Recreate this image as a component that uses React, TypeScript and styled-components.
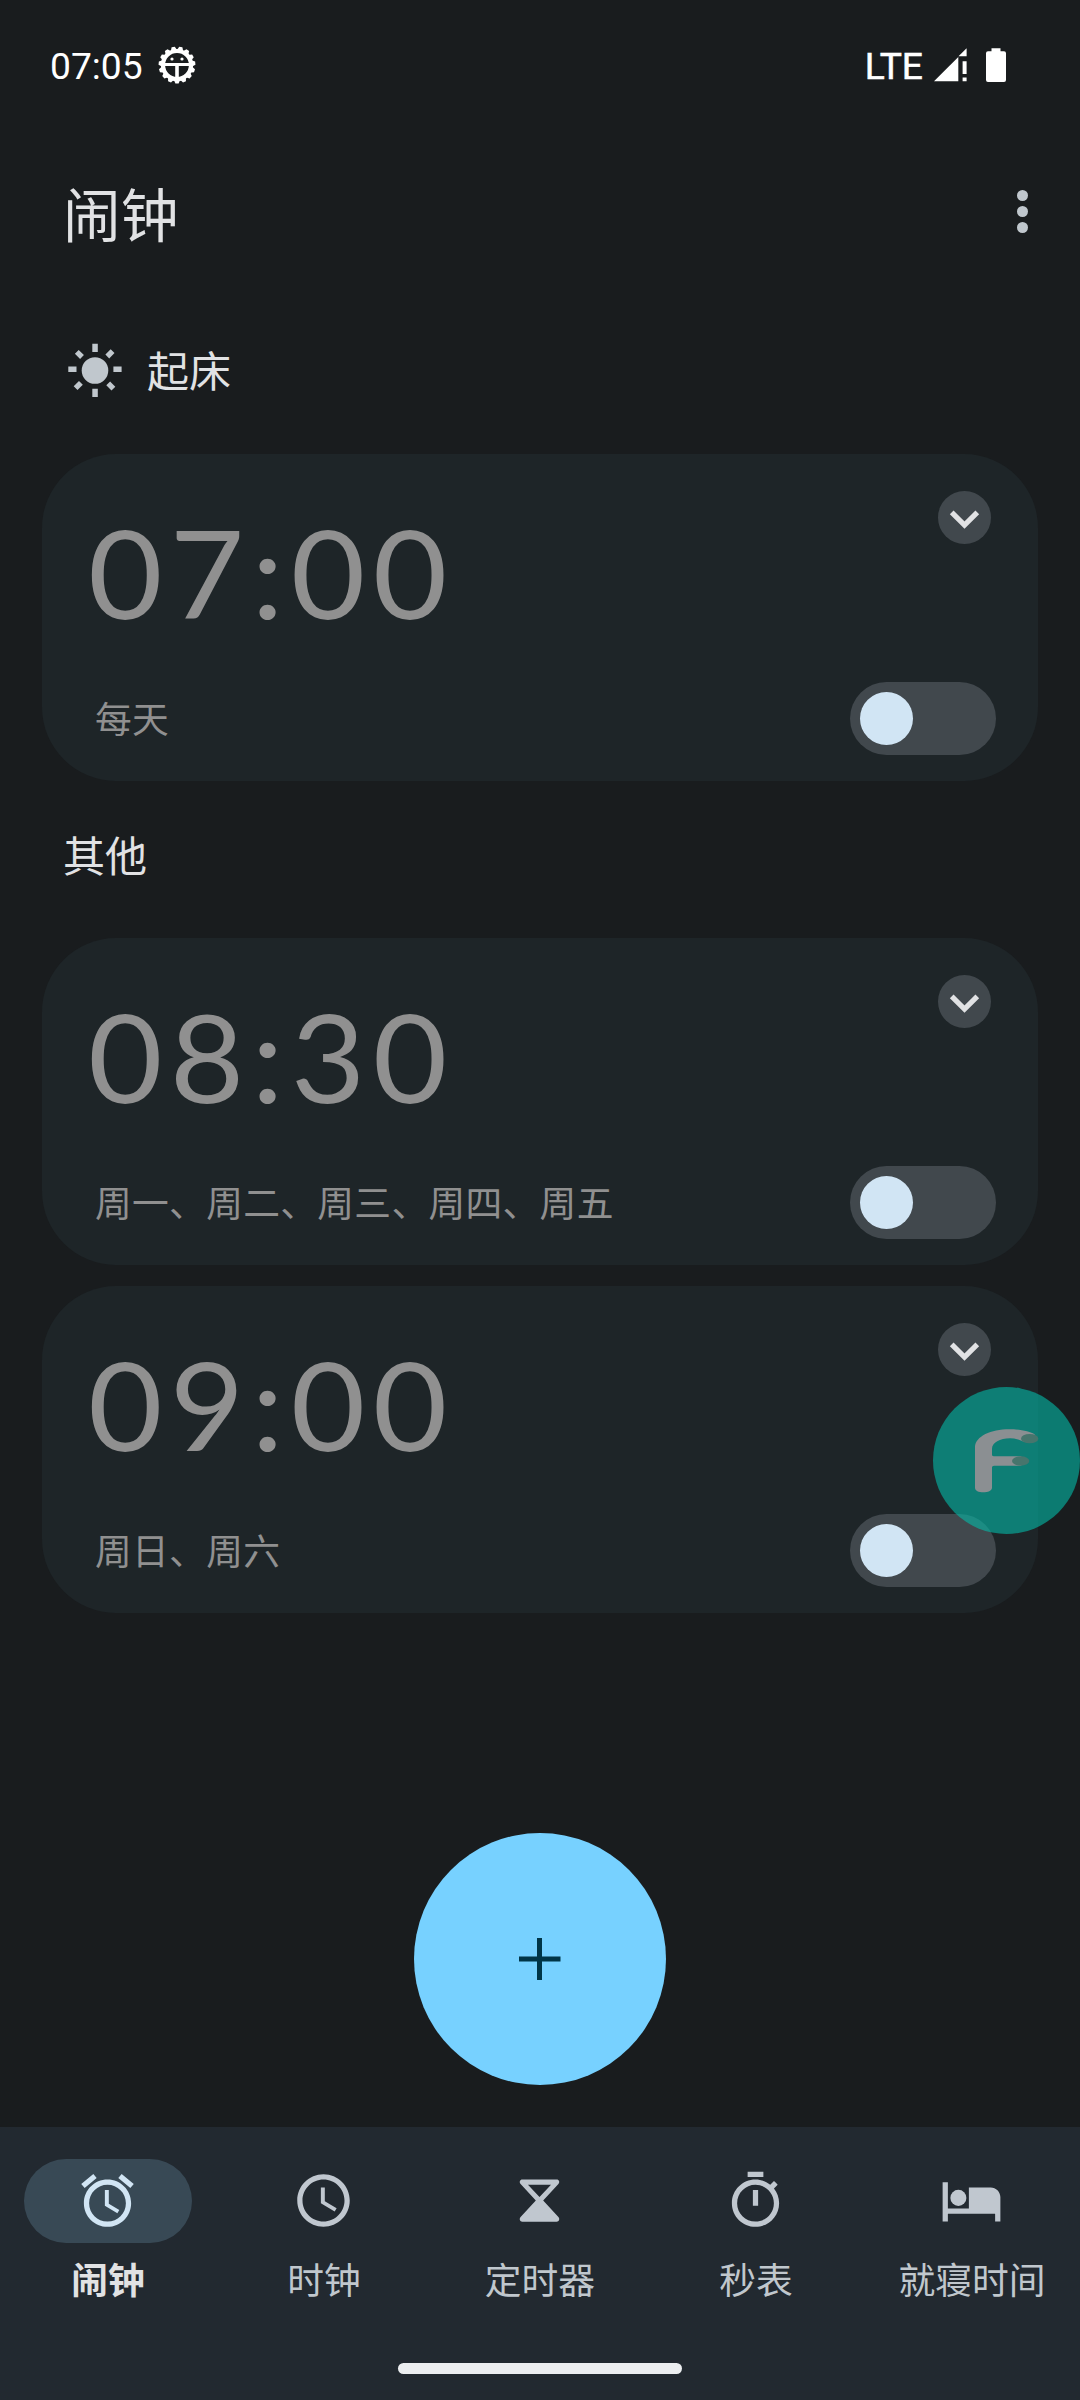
import React from 'react';
import styled, { createGlobalStyle } from 'styled-components';

const c = {
  bg: '#191c1e',
  card: '#1e2528',
  nav: '#222930',
  text: '#e1e2e4',
  soft: '#c0c7cd',
  dim: '#909090',
  control: '#41484d',
  pale: '#d1e5f4',
  accent: '#77d1ff',
  onAccent: '#003547',
};

const GlobalStyle = createGlobalStyle`
  html, body { margin: 0; padding: 0; background: ${c.bg}; }
  *, *::before, *::after { box-sizing: border-box; }
  button { border: 0; padding: 0; background: none; font: inherit; color: inherit; }
  svg { display: block; flex: none; }
`;

const Screen = styled.div`
  position: relative;
  display: flex;
  flex-direction: column;
  width: 1080px;
  height: 2400px;
  overflow: hidden;
  background: ${c.bg};
  color: ${c.text};
  font-family: Roboto, 'Noto Sans CJK SC', sans-serif;
`;

const StatusBar = styled.header`
  display: flex;
  align-items: center;
  justify-content: space-between;
  height: 130px;
  padding: 0 74px 0 50px;
  color: #fff;
`;

const StatusGroup = styled.div<{ $gap: number }>`
  display: flex;
  align-items: center;
  gap: ${(p) => p.$gap}px;
`;

const StatusText = styled.span<{ $heavy?: boolean }>`
  padding-top: 1px;
  font-size: 37.2px;
  line-height: 44px;
  -webkit-text-stroke: ${(p) => (p.$heavy ? '0.5px #fff' : '0')};
`;

const TopBar = styled.div`
  display: flex;
  align-items: center;
  justify-content: space-between;
  height: 168px;
  padding: 0 42px 0 63px;
`;

const Title = styled.h1`
  margin: 0;
  padding-top: 6px;
  font-size: 57.75px;
  line-height: 80px;
  font-weight: 400;
`;

const Menu = styled.button`
  display: flex;
  flex-direction: column;
  align-items: center;
  gap: 5px;
  width: 31px;
  padding-bottom: 6px;
`;

const Dot = styled.i`
  width: 11px;
  height: 11px;
  border-radius: 50%;
  background: ${c.soft};
`;

const SectionHead = styled.h2<{ $height: number; $lift: number }>`
  display: flex;
  align-items: center;
  gap: 20px;
  height: ${(p) => p.$height}px;
  margin: 0;
  padding: 0 63px ${(p) => p.$lift}px;
  font-size: 42px;
  line-height: 60px;
  font-weight: 400;
`;

const SectionIcon = styled.span`
  padding-bottom: 7px;
`;

const CardList = styled.div`
  display: flex;
  flex-direction: column;
  gap: 21px;
  padding: 0 42px;
`;

const Card = styled.article`
  display: flex;
  flex-direction: column;
  justify-content: space-between;
  height: 327px;
  padding: 37px 42px 26px 42px;
  border-radius: 74px;
  background: ${c.card};
`;

const CardRow = styled.div<{ $align: string }>`
  display: flex;
  align-items: ${(p) => p.$align};
  justify-content: space-between;
`;

const Time = styled.span`
  margin: 7px 0 0 3.5px;
  font-family: Lato, sans-serif;
  font-size: 123px;
  line-height: 148px;
  letter-spacing: 6.9px;
  color: ${c.dim};
  transform: scaleX(1.045);
  transform-origin: left;
  white-space: nowrap;
`;

const Days = styled.span`
  padding: 4px 0 0 11px;
  font-size: 36.75px;
  line-height: 54px;
  letter-spacing: 0.3px;
  color: ${c.dim};
`;

const Expand = styled.button`
  display: flex;
  align-items: center;
  justify-content: center;
  width: 53px;
  height: 53px;
  margin-right: 5px;
  border-radius: 50%;
  background: ${c.control};
`;

const Toggle = styled.button`
  display: flex;
  align-items: center;
  width: 146px;
  height: 73px;
  padding: 0 10px;
  border-radius: 37px;
  background: ${c.control};
`;

const Thumb = styled.i`
  width: 53px;
  height: 53px;
  border-radius: 50%;
  background: ${c.pale};
`;

const AddArea = styled.div`
  display: flex;
  flex: 1;
  align-items: flex-end;
  justify-content: center;
  padding-bottom: 42px;
`;

const AddButton = styled.button`
  display: flex;
  align-items: center;
  justify-content: center;
  width: 252px;
  height: 252px;
  border-radius: 50%;
  background: ${c.accent};
`;

const BottomArea = styled.footer`
  display: flex;
  flex-direction: column;
  align-items: center;
  height: 273px;
  background: ${c.nav};
`;

const Nav = styled.nav`
  display: grid;
  grid-template-columns: repeat(5, 216px);
  height: 236px;
  padding-top: 32px;
`;

const NavItem = styled.button<{ $active?: boolean }>`
  display: flex;
  flex-direction: column;
  align-items: center;
  justify-content: flex-start;
  gap: 12px;
  color: ${(p) => (p.$active ? c.text : c.soft)};
  font-weight: ${(p) => (p.$active ? 700 : 400)};
`;

const Pill = styled.span<{ $active?: boolean }>`
  display: flex;
  align-items: center;
  justify-content: center;
  width: 168px;
  height: 84px;
  padding: 0 2px 2px 0;
  border-radius: 42px;
  background: ${(p) => (p.$active ? '#384955' : 'transparent')};
  color: ${(p) => (p.$active ? c.pale : '#c0c7cf')};
`;

const NavLabel = styled.span`
  font-size: 36.75px;
  line-height: 54px;
  white-space: nowrap;
`;

const Handle = styled.div`
  width: 284px;
  height: 11px;
  border-radius: 6px;
  background: #eceef0;
`;

const FloatingBubble = styled.div`
  position: absolute;
  top: 1387px;
  right: 0;
  width: 147px;
  height: 147px;
  border-radius: 50%;
  background: rgba(4, 187, 168, 0.6);
`;

const teeth = Array.from({ length: 15 }, (_, i) => i * 24);

const BugIcon = () => (
  <svg width="38" height="38" viewBox="-19 -19 38 38" fill="#fff">
    {teeth.map((a) => (
      <path key={a} d="M-3.500 14L-1.600 18.400H1.600L3.500 14Z" transform={`rotate(${a})`} />
    ))}
    <circle r="14" fill="none" stroke="#fff" strokeWidth="4.2" />
    <path d="M-13-2H13V1H1.800V13H-1.800V1H-13Z" />
    <circle cx="-5" cy="-6" r="1.6" />
    <circle cx="5" cy="-6" r="1.6" />
  </svg>
);

const SignalIcon = () => (
  <svg width="33" height="34" viewBox="0 0 33 34" fill="#fff">
    <path d="M0 33.2L24.3 9V33.2Z" />
    <path d="M24.5 8.2L32.6 0.2V8.2Z" />
    <path d="M28.6 13.2h4v12.8h-4zM28.6 29.4h4v3.8h-4z" />
  </svg>
);

const BatteryIcon = () => (
  <svg width="20" height="34" viewBox="0 0 20 34" fill="#fff">
    <path d="M5.5 0.3h9v3H18a2 2 0 0 1 2 2V32a2 2 0 0 1-2 2H2a2 2 0 0 1-2-2V5.300a2 2 0 0 1 2-2h3.500z" />
  </svg>
);

const SunIcon = () => (
  <svg width="64" height="64" viewBox="-32 -32 64 64" fill={c.soft}>
    <circle cy="0.5" r="13.3" />
    <path d="M-2.700-26.200h5.500v8.200h-5.500zM-2.700 18.800h5.500v8.200h-5.500zM-26.700-3.600h8.200V1.900h-8.200zM18.400-3.600h8.200V1.900h-8.200z" />
    <path
      d="M-18.200-18.200l5.200 5.200M17.600-18.800l-5.300 5.300M-19.400 18.200l5.300-5.300M18.400 18.600l-5.200-5.200"
      stroke={c.soft}
      strokeWidth="5.4"
    />
  </svg>
);

const Chevron = () => (
  <svg width="53" height="53" viewBox="-26.5 -26.5 53 53">
    <path d="M-12.800-5.200L0 7.600L12.800-5.200" fill="none" stroke={c.text} strokeWidth="5.2" />
  </svg>
);

const PlusIcon = () => (
  <svg width="42" height="42" viewBox="0 0 42 42" fill={c.onAccent}>
    <path d="M18 0h5v18.500h18.500v5H23V42h-5V23.500H-.5v-5H18z" />
  </svg>
);

const Icon24 = ({ children }: { children: React.ReactNode }) => (
  <svg width="63" height="63" viewBox="0 0 24 24" fill="currentColor">
    {children}
  </svg>
);

const AlarmIcon = () => (
  <Icon24>
    <path d="M22 5.720l-4.600-3.860-1.290 1.530 4.600 3.860L22 5.720zM7.880 3.390L6.600 1.860 2 5.710l1.290 1.530 4.590-3.850zM12.500 8H11v6l4.750 2.850.75-1.230-4-2.370V8zM12 4c-4.970 0-9 4.030-9 9s4.020 9 9 9 9-4.030 9-9-4.030-9-9-9zm0 16c-3.870 0-7-3.130-7-7s3.130-7 7-7 7 3.130 7 7-3.130 7-7 7z" />
  </Icon24>
);

const ClockIcon = () => (
  <Icon24>
    <path d="M11.990 2C6.470 2 2 6.480 2 12s4.470 10 9.990 10C17.520 22 22 17.520 22 12S17.520 2 11.990 2zM12 20c-4.420 0-8-3.580-8-8s3.580-8 8-8 8 3.580 8 8-3.580 8-8 8zm.5-13H11v6l5.250 3.150.75-1.230-4.500-2.670V7z" />
  </Icon24>
);

const HourglassIcon = () => (
  <Icon24>
    <path
      fillRule="evenodd"
      d="M5.450 4H18.550C19.450 4 19.850 5.050 19.200 5.700L13.400 12L19.200 18.300C19.850 19 19.450 20.050 18.550 20.050H5.450C4.550 20.050 4.150 19 4.800 18.300L10.600 12L4.800 5.700C4.150 5.050 4.550 4 5.450 4ZM7.600 6L12 10.650L16.400 6Z"
    />
  </Icon24>
);

const StopwatchIcon = () => (
  <Icon24>
    <path d="M15 1H9v2h6V1zm-4 13h2V8h-2v6zm8.030-6.610l1.420-1.420c-.43-.51-.9-.99-1.410-1.410l-1.420 1.420C16.070 4.740 14.120 4 12 4c-4.970 0-9 4.030-9 9s4.020 9 9 9 9-4.030 9-9c0-2.120-.74-4.070-1.970-5.610zM12 20c-3.870 0-7-3.130-7-7s3.130-7 7-7 7 3.130 7 7-3.130 7-7 7z" />
  </Icon24>
);

const BedIcon = () => (
  <Icon24>
    <circle cx="7" cy="11" r="3.050" />
    <path d="M1 5h2v10h8V7h8.300c2.050 0 3.700 1.650 3.700 3.700V20h-2v-3H3v3H1z" />
  </Icon24>
);

const BubbleLogo = () => (
  <svg width="147" height="147" viewBox="339 350 441 441">
    <path
      fill="#8b8f92"
      d="M465 530C467 498 512 477 568 477C600 477 630 483 645 493L612 515C600 508 585 504 570 504C540 504 516 518 516 535V553Q516 558 522 558H604V586H522Q516 586 516 591V652C516 661 503 666 490 666C476 666 465 661 465 652Z"
    />
    <ellipse cx="629" cy="505" rx="26" ry="14" fill="#47756d" />
    <ellipse cx="602" cy="572" rx="26" ry="14" fill="#47756d" />
  </svg>
);

const AlarmCard = ({ time, days }: { time: string; days: string }) => (
  <Card>
    <CardRow $align="flex-start">
      <Time>{time}</Time>
      <Expand aria-label="展开">
        <Chevron />
      </Expand>
    </CardRow>
    <CardRow $align="center">
      <Days>{days}</Days>
      <Toggle role="switch" aria-checked={false}>
        <Thumb />
      </Toggle>
    </CardRow>
  </Card>
);

const tabs = [
  { label: '闹钟', icon: AlarmIcon, active: true },
  { label: '时钟', icon: ClockIcon },
  { label: '定时器', icon: HourglassIcon },
  { label: '秒表', icon: StopwatchIcon },
  { label: '就寝时间', icon: BedIcon },
];

export default function App() {
  return (
    <>
      <GlobalStyle />
      <Screen>
        <StatusBar>
          <StatusGroup $gap={15}>
            <StatusText>07:05</StatusText>
            <BugIcon />
          </StatusGroup>
          <StatusGroup $gap={19}>
            <StatusGroup $gap={11}>
              <StatusText $heavy>LTE</StatusText>
              <SignalIcon />
            </StatusGroup>
            <BatteryIcon />
          </StatusGroup>
        </StatusBar>
        <TopBar>
          <Title>闹钟</Title>
          <Menu aria-label="更多">
            <Dot />
            <Dot />
            <Dot />
          </Menu>
        </TopBar>
        <SectionHead $height={156} $lift={6}>
          <SectionIcon>
            <SunIcon />
          </SectionIcon>
          起床
        </SectionHead>
        <CardList>
          <AlarmCard time="07:00" days="每天" />
        </CardList>
        <SectionHead $height={157} $lift={4}>
          其他
        </SectionHead>
        <CardList>
          <AlarmCard time="08:30" days="周一、周二、周三、周四、周五" />
          <AlarmCard time="09:00" days="周日、周六" />
        </CardList>
        <AddArea>
          <AddButton aria-label="添加闹钟">
            <PlusIcon />
          </AddButton>
        </AddArea>
        <BottomArea>
          <Nav>
            {tabs.map(({ label, icon: TabIcon, active }) => (
              <NavItem key={label} $active={active}>
                <Pill $active={active}>
                  <TabIcon />
                </Pill>
                <NavLabel>{label}</NavLabel>
              </NavItem>
            ))}
          </Nav>
          <Handle />
        </BottomArea>
        <FloatingBubble>
          <BubbleLogo />
        </FloatingBubble>
      </Screen>
    </>
  );
}
